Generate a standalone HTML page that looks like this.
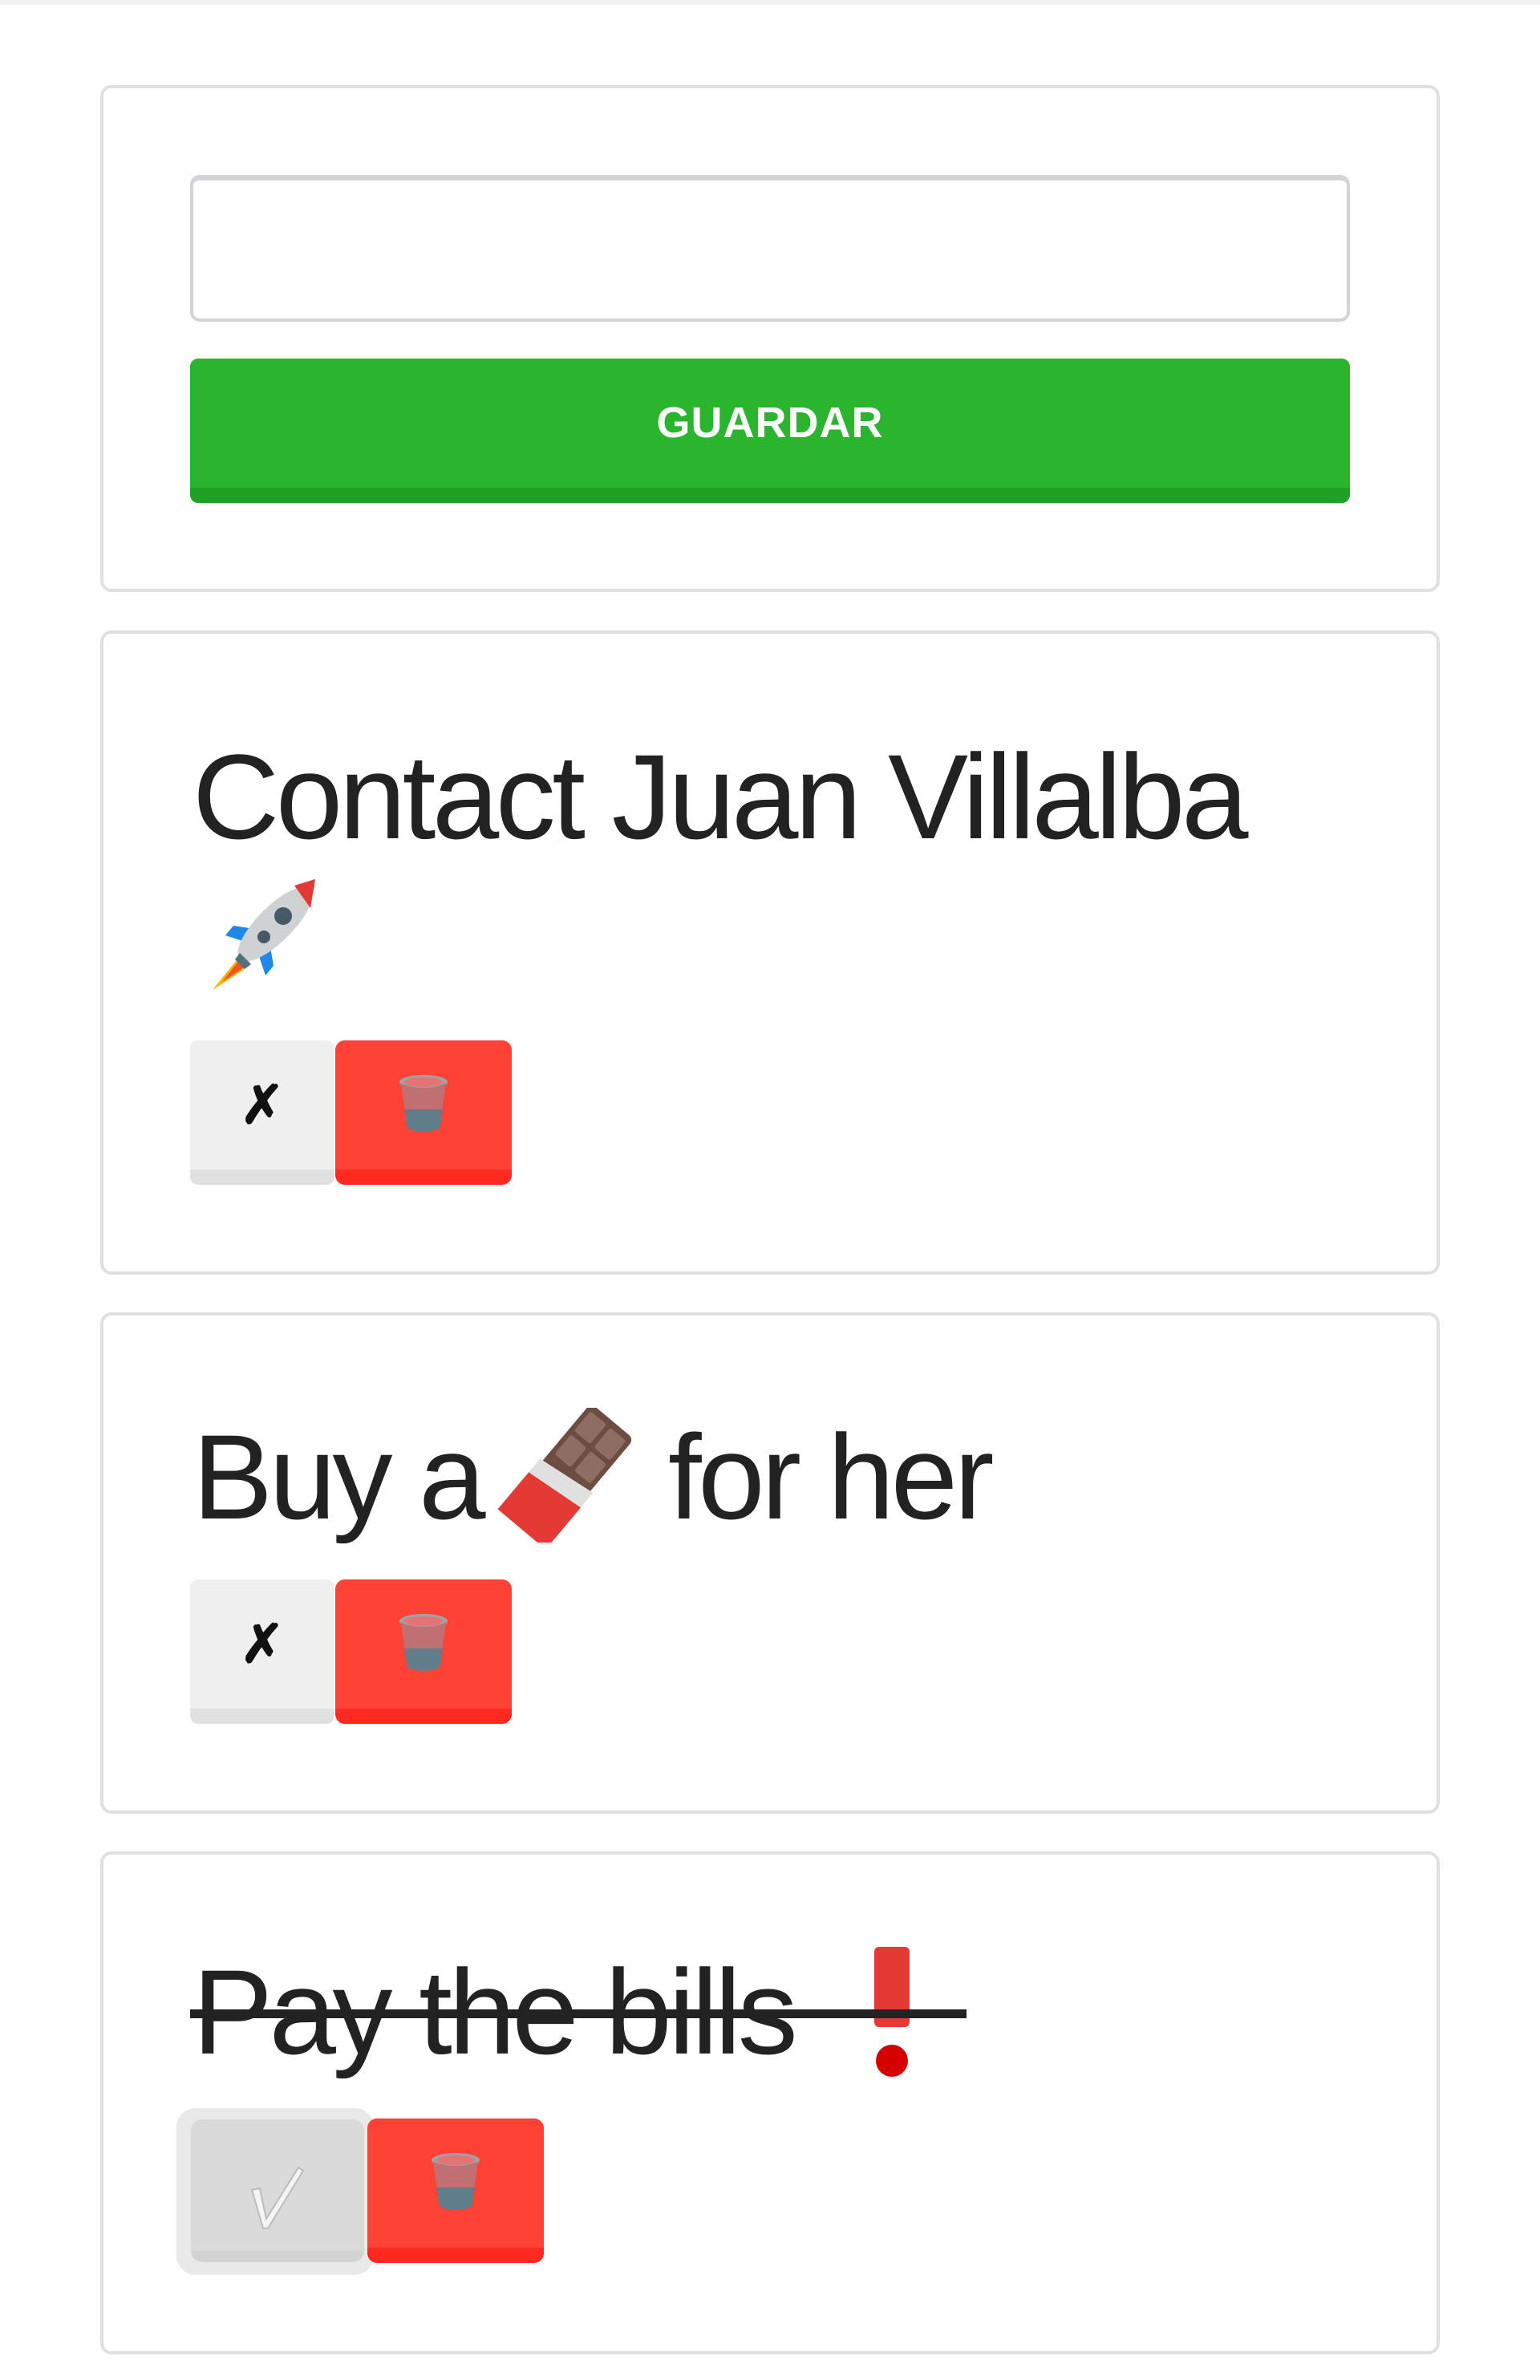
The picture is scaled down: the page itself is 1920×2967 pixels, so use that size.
<!DOCTYPE html>
<html><head><meta charset="utf-8"><style>
*{margin:0;padding:0;box-sizing:border-box}
body{width:1920px;height:2967px;background:#fff;position:relative;overflow:hidden;font-family:"Liberation Sans",sans-serif;color:#222}
.top{position:absolute;left:0;top:0;width:1920px;height:6px;background:#f3f3f3}
.card{position:absolute;left:125px;width:1670px;border:4px solid #e0e0e0;border-radius:14px;background:#fff}
.abs{position:absolute}
.input{left:237px;top:218px;width:1446px;height:183px;border:4px solid #d4d4d8;border-top-width:7px;border-radius:12px;background:#fff}
.save{left:237px;top:447px;width:1446px;height:180px;background:#2bb52e;border-bottom:19px solid #21a124;border-radius:10px;color:#fff;font-weight:bold;font-size:54px;text-align:center;line-height:161px;letter-spacing:1px}
.t{font-size:150px;line-height:170px;letter-spacing:-4.5px;white-space:nowrap;color:#222}
.gb{width:180px;height:180px;background:#efefef;border-bottom:19px solid #e0e0e0;border-radius:10px;font-family:"Liberation Sans",sans-serif;font-weight:bold;font-size:66px;text-align:center;line-height:161px;color:#111}
.rb{width:220px;height:180px;background:#ff4136;border-bottom:19px solid #ff2a1f;border-radius:12px}
.rb svg{position:absolute;left:78px;top:42px}
</style></head><body>
<div class="top"></div>
<div class="card" style="top:106px;height:632px"></div>
<div class="abs input"></div>
<div class="abs save">GUARDAR</div>

<div class="card" style="top:786px;height:803px"></div>
<div class="abs t" style="left:240px;top:908px">Contact Juan Villalba</div>
<svg class="abs" style="left:255px;top:1092px" width="150" height="146" viewBox="0 0 150 146">
<path d="M56 84 L26 74 L36 62 L62 66 Z" fill="#1e88e5"/><path d="M66 94 L76 124 L86 112 L82 88 Z" fill="#1e88e5"/>
<path d="M44 100 L10 142 L56 112 Z" fill="#ffb300"/><path d="M44 104 L22 132 L52 112 Z" fill="#f4511e"/>
<ellipse cx="88" cy="60" rx="22" ry="62" transform="rotate(45 88 60)" fill="#cfd2d4"/>
<path d="M118 16 Q140 0 136 6 Q140 10 130 34 Z" fill="#e53935"/>
<path d="M112 12 L138 4 L132 40 Z" fill="#e53935"/>
<path d="M44 96 L58 110 L50 116 L38 104 Z" fill="#546e7a"/>
<circle cx="98" cy="50" r="11" fill="#455a64"/><circle cx="74" cy="76" r="8" fill="#455a64"/>
</svg>
<div class="abs gb" style="left:237px;top:1297px">✗</div>
<div class="abs rb" style="left:418px;top:1297px"><svg width="64" height="74" viewBox="0 0 64 74"><ellipse cx="32" cy="10" rx="30" ry="9" fill="#9aa5ab"/><path d="M4 12 L12 68 Q32 76 52 68 L60 12 Q32 22 4 12Z" fill="#c07070"/><path d="M8 44 L12 68 Q32 76 52 68 L56 44 Z" fill="#607d8b"/><ellipse cx="32" cy="10" rx="24" ry="6" fill="#e57373"/></svg></div>

<div class="card" style="top:1636px;height:625px"></div>
<div class="abs t" style="left:240px;top:1756px">Buy a</div>
<svg class="abs" style="left:620px;top:1755px" width="174" height="168" viewBox="0 0 174 168">
<g transform="rotate(40 87 84)"><rect x="52" y="-4" width="70" height="176" rx="8" fill="#6d4c41"/>
<rect x="58" y="4" width="26" height="32" rx="3" fill="#8d6e63"/><rect x="90" y="4" width="26" height="32" rx="3" fill="#8d6e63"/>
<rect x="58" y="42" width="26" height="32" rx="3" fill="#8d6e63"/><rect x="90" y="42" width="26" height="32" rx="3" fill="#8d6e63"/>
<path d="M48 90 L126 80 L126 172 L48 172Z" fill="#e0e0e0"/><path d="M48 112 L126 104 L126 172 L48 172Z" fill="#e53935"/></g></svg>
<div class="abs t" style="left:833px;top:1756px">for her</div>
<div class="abs gb" style="left:237px;top:1969px">✗</div>
<div class="abs rb" style="left:418px;top:1969px"><svg width="64" height="74" viewBox="0 0 64 74"><ellipse cx="32" cy="10" rx="30" ry="9" fill="#9aa5ab"/><path d="M4 12 L12 68 Q32 76 52 68 L60 12 Q32 22 4 12Z" fill="#c07070"/><path d="M8 44 L12 68 Q32 76 52 68 L56 44 Z" fill="#607d8b"/><ellipse cx="32" cy="10" rx="24" ry="6" fill="#e57373"/></svg></div>

<div class="card" style="top:2308px;height:627px"></div>
<div class="abs t" style="left:240px;top:2423px">Pay the bills</div>
<svg class="abs" style="left:1086px;top:2427px" width="52" height="166" viewBox="0 0 52 166"><rect x="4" y="0" width="44" height="100" rx="6" fill="#e53935"/><circle cx="26" cy="142" r="20" fill="#d50000"/></svg>
<div class="abs" style="left:237px;top:2505px;width:968px;height:11px;background:#222"></div>
<div class="abs" style="left:220px;top:2628px;width:246px;height:208px;background:#e9e9e9;border-radius:24px"></div>
<div class="abs" style="left:238px;top:2642px;width:216px;height:178px;background:#dadada;border-bottom:14px solid #d3d3d3;border-radius:14px"></div>
<svg class="abs" style="left:310px;top:2700px" width="70" height="80" viewBox="0 0 70 80"><path d="M4 30 L14 28 L22 66 L62 2 L68 6 L24 78 L18 78 Z" fill="#f4f4f4" stroke="#bbb" stroke-width="2"/></svg>
<div class="abs rb" style="left:458px;top:2641px"><svg width="64" height="74" viewBox="0 0 64 74"><ellipse cx="32" cy="10" rx="30" ry="9" fill="#9aa5ab"/><path d="M4 12 L12 68 Q32 76 52 68 L60 12 Q32 22 4 12Z" fill="#c07070"/><path d="M8 44 L12 68 Q32 76 52 68 L56 44 Z" fill="#607d8b"/><ellipse cx="32" cy="10" rx="24" ry="6" fill="#e57373"/></svg></div>
</body></html>
